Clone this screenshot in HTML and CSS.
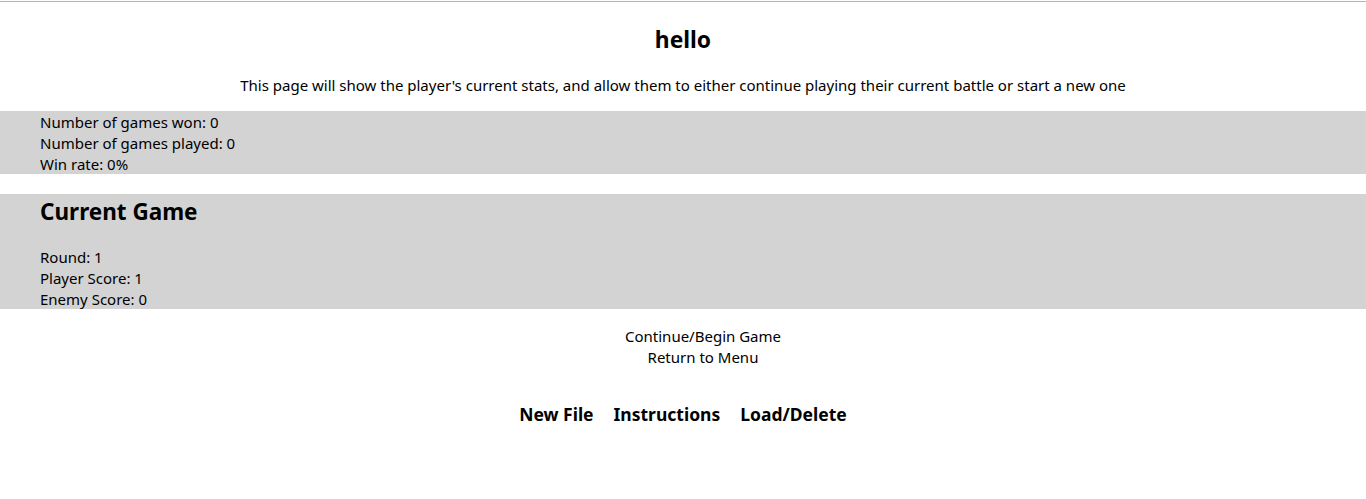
FILE: index.html
```html
<!DOCTYPE html>
<html lang="en">
<head>
<meta charset="utf-8">
<title>hello</title>
<link rel="stylesheet" href="styles.css">
</head>
<body>
<header class="top">
  <h1 class="title">hello</h1>
  <p class="intro">This page will show the player's current stats, and allow them to either continue playing their current battle or start a new one</p>
</header>
<section class="panel stats">
  <div class="line">Number of games won: 0</div>
  <div class="line">Number of games played: 0</div>
  <div class="line">Win rate: 0%</div>
</section>
<section class="panel game">
  <h2 class="game-title">Current Game</h2>
  <div class="line">Round: 1</div>
  <div class="line">Player Score: 1</div>
  <div class="line">Enemy Score: 0</div>
</section>
<div class="actions">
  <a class="action">Continue/Begin Game</a>
  <a class="action">Return to Menu</a>
</div>
<nav class="nav">
  <a class="nav-item">New File</a>
  <a class="nav-item">Instructions</a>
  <a class="nav-item">Load/Delete</a>
</nav>
</body>
</html>
```
FILE: styles.css
```css
html, body {
  margin: 0;
  padding: 0;
  background: #ffffff;
}
body {
  padding-top: 1px;
  font-family: "Noto Sans", "Open Sans", sans-serif;
  font-size: 15px;
  line-height: 21px;
  color: #000;
}
.top {
  border-top: 1px solid #b4b4b4;
  text-align: center;
  padding-top: 22px;
}
.title {
  margin: 0 0 19px;
  font-size: 22.8px;
  line-height: 32px;
  font-weight: 700;
}
.intro {
  margin: 0 0 15px;
}
.panel {
  background: #d3d3d3;
  padding: 0 40px;
}
.stats {
  margin-bottom: 20px;
}
.game-title {
  margin: 0 0 18px;
  padding-top: 2px;
  font-size: 22.5px;
  line-height: 32px;
  font-weight: 700;
}
.line {
  height: 21px;
  padding-top: 1px;
  box-sizing: border-box;
}
.actions {
  display: flex;
  flex-direction: column;
  align-items: center;
  margin-top: 17px;
  padding-left: 40px;
}
.action {
  color: #000;
}
.nav {
  display: flex;
  justify-content: center;
  gap: 20px;
  margin-top: 34px;
  font-size: 17.5px;
  font-weight: 700;
  line-height: 24px;
}
.nav-item {
  color: #000;
}
```
